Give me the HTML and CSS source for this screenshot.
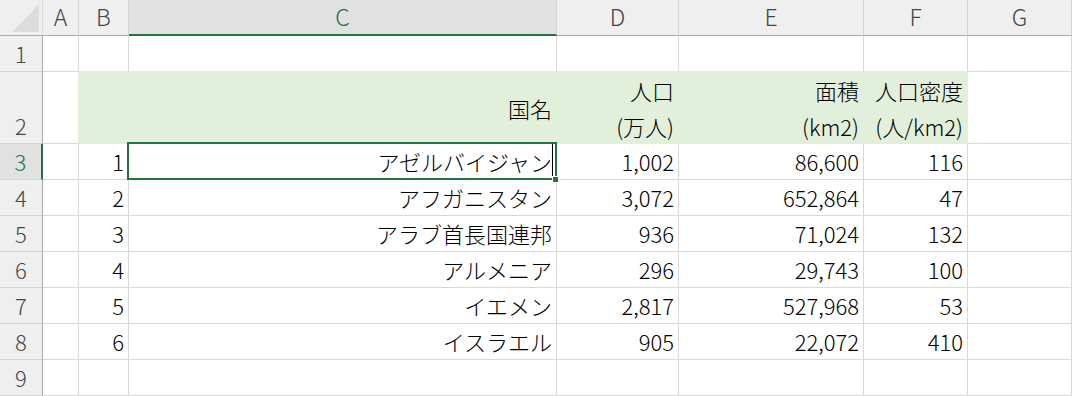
FILE: index.html
```html
<!DOCTYPE html>
<html lang="ja">
<head>
<meta charset="utf-8">
<title>Sheet</title>
<link rel="stylesheet" href="styles.css">
</head>
<body>
<div class="sheet">
  <div class="c corner"><svg class="tri" width="42" height="35" viewBox="0 0 42 35"><polygon points="39,4 39,32 12,32" fill="#dcdcdc"/></svg></div>
  <div class="c ch">A</div>
  <div class="c ch">B</div>
  <div class="c ch sel">C</div>
  <div class="c ch">D</div>
  <div class="c ch">E</div>
  <div class="c ch">F</div>
  <div class="c ch">G</div>

  <div class="c rh">1</div>
  <div class="c"></div>
  <div class="c above"></div>
  <div class="c above"></div>
  <div class="c above"></div>
  <div class="c above"></div>
  <div class="c above"></div>
  <div class="c"></div>

  <div class="c rh">2</div>
  <div class="c before"></div>
  <div class="c fill"></div>
  <div class="c fill mid">国名</div>
  <div class="c fill">人口<br>(万人)</div>
  <div class="c fill">面積<br>(km2)</div>
  <div class="c fill">人口密度<br>(人/km2)</div>
  <div class="c"></div>

  <div class="c rh sel">3</div>
  <div class="c"></div>
  <div class="c">1</div>
  <div class="c active">アゼルバイジャン<span class="caret"></span></div>
  <div class="c">1,002</div>
  <div class="c">86,600</div>
  <div class="c">116</div>
  <div class="c"></div>

  <div class="c rh">4</div>
  <div class="c"></div>
  <div class="c">2</div>
  <div class="c">アフガニスタン</div>
  <div class="c">3,072</div>
  <div class="c">652,864</div>
  <div class="c">47</div>
  <div class="c"></div>

  <div class="c rh">5</div>
  <div class="c"></div>
  <div class="c">3</div>
  <div class="c">アラブ首長国連邦</div>
  <div class="c">936</div>
  <div class="c">71,024</div>
  <div class="c">132</div>
  <div class="c"></div>

  <div class="c rh">6</div>
  <div class="c"></div>
  <div class="c">4</div>
  <div class="c">アルメニア</div>
  <div class="c">296</div>
  <div class="c">29,743</div>
  <div class="c">100</div>
  <div class="c"></div>

  <div class="c rh">7</div>
  <div class="c"></div>
  <div class="c">5</div>
  <div class="c">イエメン</div>
  <div class="c">2,817</div>
  <div class="c">527,968</div>
  <div class="c">53</div>
  <div class="c"></div>

  <div class="c rh">8</div>
  <div class="c"></div>
  <div class="c">6</div>
  <div class="c">イスラエル</div>
  <div class="c">905</div>
  <div class="c">22,072</div>
  <div class="c">410</div>
  <div class="c"></div>

  <div class="c rh">9</div>
  <div class="c"></div>
  <div class="c"></div>
  <div class="c"></div>
  <div class="c"></div>
  <div class="c"></div>
  <div class="c"></div>
  <div class="c"></div>
</div>
</body>
</html>
```

FILE: styles.css
```css
body {
  margin: 0;
  background: #fff;
  font-family: "Noto Sans CJK JP", "Noto Sans", sans-serif;
}

.sheet {
  display: grid;
  grid-template-columns: 43px 36px 50px 428px 122px 185px 104px 104px;
  grid-template-rows: 36px 36px 72px repeat(7, 36px);
  width: 1072px;
  height: 396px;
  overflow: hidden;
}

.c {
  box-sizing: border-box;
  border-right: 1px solid #d9d9d9;
  border-bottom: 1px solid #d9d9d9;
  font-size: 22px;
  font-weight: 300;
  line-height: 35px;
  color: #000;
  padding-right: 4px;
  text-align: right;
  white-space: nowrap;
}

.corner {
  background: #efefef;
  border-right-color: #dadada;
  border-bottom-color: #ababab;
  padding: 0;
  position: relative;
}

.tri {
  position: absolute;
  left: 0;
  top: 0;
}

.ch {
  background: #efefef;
  border-right-color: #d4d4d4;
  border-bottom-color: #ababab;
  text-align: center;
  color: #444;
  font-size: 23px;
  line-height: 33px;
  padding: 0;
}

.ch.sel {
  background: #e1e1e1;
  color: #217346;
  border-bottom: 2px solid #217346;
}

.rh {
  background: #efefef;
  border-right-color: #ababab;
  border-bottom-color: #d4d4d4;
  padding: 0;
  color: #444;
  display: flex;
  align-items: flex-end;
  justify-content: center;
}

.rh.sel {
  background: #e1e1e1;
  color: #217346;
  border-right: 2px solid #217346;
}

.fill {
  background: #e2efda;
  border-right-color: #e2efda;
  border-bottom-color: #e2efda;
  line-height: 36px;
}

.mid {
  display: flex;
  align-items: center;
  justify-content: flex-end;
}

.above {
  border-bottom-color: #e2efda;
}

.before {
  border-right-color: #e2efda;
}

.active {
  position: relative;
}

.active::after {
  content: "";
  position: absolute;
  left: -2px;
  top: -2px;
  right: -1px;
  bottom: -1px;
  border: 2px solid #217346;
}

.active::before {
  content: "";
  position: absolute;
  right: -3px;
  bottom: -4px;
  width: 5px;
  height: 5px;
  background: #217346;
  border: 1px solid #fff;
  z-index: 2;
}

.caret {
  position: absolute;
  right: 3px;
  top: 0;
  bottom: 0;
  width: 1px;
  background: #000;
}
```
